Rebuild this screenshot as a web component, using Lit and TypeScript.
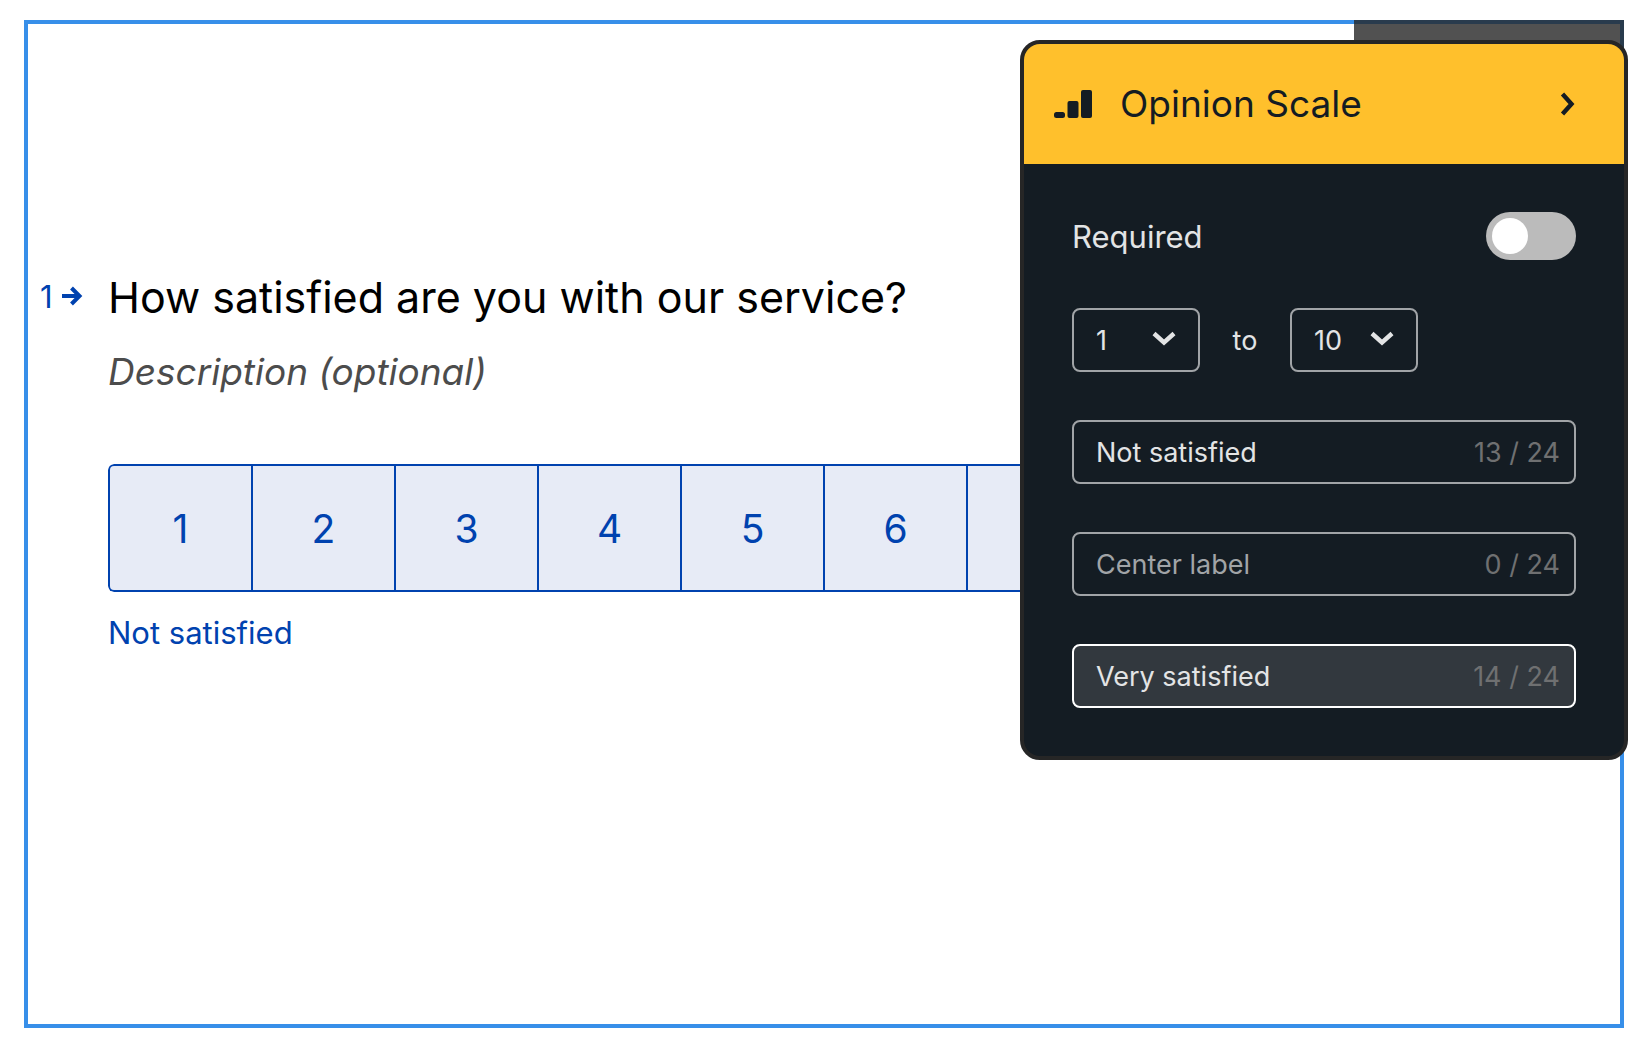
import { LitElement, html, css, svg } from "lit";
import { customElement, state, property } from "lit/decorators.js";
import { classMap } from "lit/directives/class-map.js";

const MAX_LABEL = 24;

interface LabelField {
  id: string;
  name: string;
  value: string;
  active: boolean;
}

const chevronDown = html`<svg class="caret" width="24" height="16" viewBox="0 0 24 16" aria-hidden="true">
  ${svg`<path d="M2 2.5 L12 11.5 L22 2.5" fill="none" stroke="currentColor" stroke-width="4.4"/>`}
</svg>`;

@customElement("question-card")
export class QuestionCard extends LitElement {
  @property({ type: Number }) from = 1;
  @property({ type: Number }) to = 10;
  @property() caption = "";

  static styles = css`
    :host {
      display: block;
    }
    .question {
      display: grid;
      grid-template-columns: 80px minmax(0, 1fr);
      padding: 244px 80px 0 0;
      color: #000;
    }
    .index {
      display: flex;
      align-items: center;
      gap: 8px;
      height: 56px;
      padding-left: 12px;
      font-size: 31px;
      color: #0042af;
    }
    .arrow {
      flex: none;
    }
    .title {
      margin: 0;
      font-size: 43px;
      line-height: 58px;
      font-weight: 400;
    }
    .description {
      margin: 22px 0 0;
      font-size: 37px;
      line-height: 48px;
      font-style: italic;
      color: #4c4c4c;
    }
    .scale {
      display: flex;
      height: 128px;
      margin-top: 68px;
      border-radius: 6px;
      overflow: hidden;
    }
    .cell {
      flex: 1 1 0;
      min-width: 0;
      padding: 0;
      border: solid #0042af;
      border-width: 2px 0 2px 2px;
      background: #e7ebf6;
      color: #0042af;
      font: inherit;
      font-size: 39px;
      cursor: pointer;
    }
    .cell:first-child {
      border-radius: 6px 0 0 6px;
    }
    .cell:last-child {
      border-right-width: 2px;
      border-radius: 0 6px 6px 0;
    }
    .caption {
      margin: 20px 0 0;
      font-size: 31px;
      line-height: 42px;
      color: #0042af;
    }
  `;

  render() {
    const steps = Array.from({ length: this.to - this.from + 1 }, (_, i) => this.from + i);
    return html`
      <section class="question">
        <div class="index">
          <span>1</span>
          <svg class="arrow" width="22" height="20" viewBox="0 0 22 20" aria-hidden="true">
            <path d="M1 10H18M10.5 2L18.5 10L10.5 18" fill="none" stroke="currentColor" stroke-width="4" />
          </svg>
        </div>
        <div>
          <h1 class="title">How satisfied are you with our service?</h1>
          <p class="description">Description (optional)</p>
          <div class="scale" role="group">
            ${steps.map((n) => html`<button class="cell" type="button">${n}</button>`)}
          </div>
          <p class="caption">${this.caption}</p>
        </div>
      </section>
    `;
  }
}

@customElement("scale-settings")
export class ScaleSettings extends LitElement {
  @property({ type: Number }) from = 1;
  @property({ type: Number }) to = 10;
  @property({ attribute: false }) labels: LabelField[] = [];

  static styles = css`
    :host {
      display: block;
    }
    .panel {
      overflow: hidden;
      border: 4px solid #262626;
      border-radius: 20px;
      background: #141c23;
      color: #e3e4e5;
    }
    .header {
      display: flex;
      align-items: center;
      height: 120px;
      padding: 0 48px 0 30px;
      background: #ffc02c;
      color: #141c23;
    }
    .heading {
      flex: 1;
      margin: 0 0 0 28px;
      font-size: 37px;
      line-height: 48px;
      font-weight: 400;
    }
    .expand {
      display: flex;
      padding: 0;
      border: 0;
      background: none;
      color: inherit;
      cursor: pointer;
    }
    .body {
      display: grid;
      gap: 48px;
      padding: 48px;
    }
    .required {
      display: flex;
      align-items: center;
      justify-content: space-between;
      font-size: 31px;
    }
    .toggle {
      appearance: none;
      display: flex;
      width: 90px;
      height: 48px;
      margin: 0;
      padding: 6px;
      box-sizing: border-box;
      border-radius: 24px;
      background: #bbb;
      cursor: pointer;
    }
    .toggle::before {
      content: "";
      width: 36px;
      height: 36px;
      border-radius: 50%;
      background: #fff;
    }
    .toggle:checked {
      justify-content: flex-end;
    }
    .range {
      display: flex;
      align-items: center;
      font-size: 27px;
    }
    .range-word {
      width: 90px;
      text-align: center;
    }
    .picker {
      display: grid;
      align-items: center;
      width: 128px;
    }
    .select,
    .caret {
      grid-area: 1 / 1;
    }
    .select {
      appearance: none;
      width: 100%;
      height: 64px;
      padding: 0 0 0 22px;
      border: 2px solid #a1a4a7;
      border-radius: 8px;
      background: none;
      color: inherit;
      font: inherit;
    }
    .caret {
      justify-self: end;
      margin-right: 24px;
      margin-bottom: 2px;
      pointer-events: none;
    }
    .field {
      display: flex;
      align-items: center;
      height: 64px;
      padding: 0 14px 0 22px;
      box-sizing: border-box;
      border: 2px solid #a1a4a7;
      border-radius: 8px;
      font-size: 27px;
    }
    .field.active {
      border-color: #fff;
      background: #32383e;
    }
    .input {
      flex: 1;
      min-width: 0;
      padding: 0;
      border: 0;
      outline: 0;
      background: none;
      color: inherit;
      font: inherit;
    }
    .input::placeholder {
      color: #a1a4a7;
      opacity: 1;
    }
    .count {
      color: #6f7071;
    }
  `;

  private options(selected: number, values: number[]) {
    return values.map((v) => html`<option value=${v} ?selected=${v === selected}>${v}</option>`);
  }

  private emit(name: string, detail: unknown) {
    this.dispatchEvent(new CustomEvent(name, { detail }));
  }

  render() {
    return html`
      <aside class="panel">
        <header class="header">
          <svg width="38" height="28" viewBox="0 0 38 28" aria-hidden="true">
            <rect x="0" y="22" width="11" height="6" rx="2.5" fill="currentColor" />
            <rect x="13.5" y="11" width="11" height="17" rx="2" fill="currentColor" />
            <rect x="27" y="0" width="11" height="28" rx="2" fill="currentColor" />
          </svg>
          <h2 class="heading">Opinion Scale</h2>
          <button class="expand" type="button" aria-label="Expand">
            <svg width="16" height="24" viewBox="0 0 16 24" aria-hidden="true">
              <path d="M2.5 2L11.5 12L2.5 22" fill="none" stroke="currentColor" stroke-width="4.4" />
            </svg>
          </button>
        </header>
        <div class="body">
          <div class="required">
            <label for="required">Required</label>
            <input class="toggle" id="required" type="checkbox" role="switch" />
          </div>
          <div class="range">
            <div class="picker">
              <select
                class="select"
                aria-label="From"
                @change=${(e: Event) => this.emit("from-change", Number((e.target as HTMLSelectElement).value))}
              >
                ${this.options(this.from, [0, 1])}
              </select>
              ${chevronDown}
            </div>
            <span class="range-word">to</span>
            <div class="picker">
              <select
                class="select"
                aria-label="To"
                @change=${(e: Event) => this.emit("to-change", Number((e.target as HTMLSelectElement).value))}
              >
                ${this.options(this.to, [5, 6, 7, 8, 9, 10])}
              </select>
              ${chevronDown}
            </div>
          </div>
          ${this.labels.map(
            (label) => html`
              <div class=${classMap({ field: true, active: label.active })}>
                <input
                  class="input"
                  id=${label.id}
                  type="text"
                  maxlength=${MAX_LABEL}
                  aria-label=${label.name}
                  placeholder=${label.name}
                  .value=${label.value}
                  @input=${(e: Event) =>
                    this.emit("label-change", { id: label.id, value: (e.target as HTMLInputElement).value })}
                />
                <label class="count" for=${label.id}>${label.value.length} / ${MAX_LABEL}</label>
              </div>
            `
          )}
        </div>
      </aside>
    `;
  }
}

@customElement("app-root")
export class AppRoot extends LitElement {
  @state() private from = 1;
  @state() private to = 10;
  @state() private labels: LabelField[] = [
    { id: "left", name: "Left label", value: "Not satisfied", active: false },
    { id: "center", name: "Center label", value: "", active: false },
    { id: "right", name: "Right label", value: "Very satisfied", active: true },
  ];

  static styles = css`
    :host {
      display: flex;
      min-height: 100vh;
      padding: 20px 26px 30px 24px;
      box-sizing: border-box;
      background: #fff;
      font-family: Inter, "Liberation Sans", sans-serif;
    }
    .frame {
      position: relative;
      flex: 1;
      min-width: 0;
      box-sizing: border-box;
      border: 4px solid #378fe9;
    }
    .shade {
      position: absolute;
      top: -4px;
      right: -4px;
      width: 270px;
      height: 60px;
      background: rgba(38, 38, 38, 0.8);
    }
    .settings {
      position: absolute;
      top: 16px;
      right: -8px;
      width: 608px;
    }
  `;

  render() {
    return html`
      <main class="frame">
        <question-card .from=${this.from} .to=${this.to} .caption=${this.labels[0].value}></question-card>
        <div class="shade"></div>
        <scale-settings
          class="settings"
          .from=${this.from}
          .to=${this.to}
          .labels=${this.labels}
          @from-change=${(e: CustomEvent) => (this.from = e.detail)}
          @to-change=${(e: CustomEvent) => (this.to = e.detail)}
          @label-change=${(e: CustomEvent) =>
            (this.labels = this.labels.map((l) => (l.id === e.detail.id ? { ...l, value: e.detail.value } : l)))}
        ></scale-settings>
      </main>
    `;
  }
}
